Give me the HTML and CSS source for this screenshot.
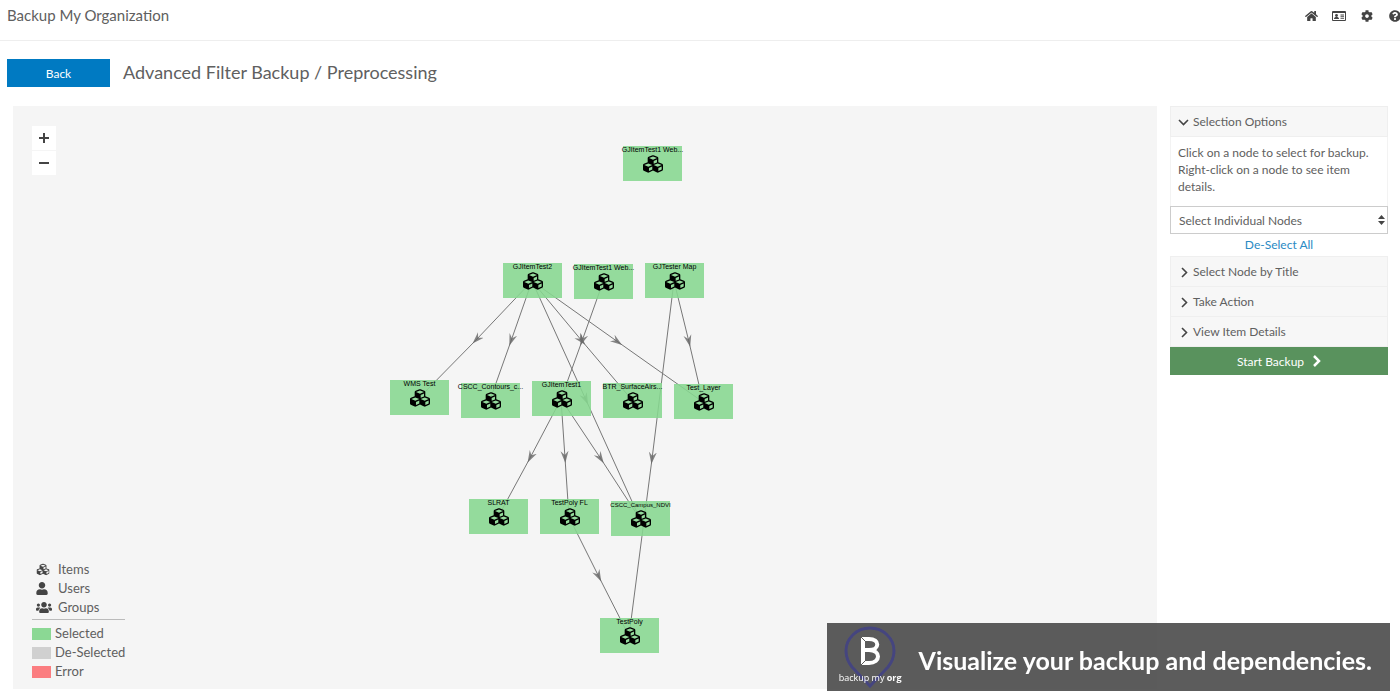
FILE: index.html
```html
<!DOCTYPE html>
<html lang="en">
<head>
<meta charset="utf-8">
<title>Backup My Organization</title>
<link rel="stylesheet" href="styles.css">
</head>
<body>
<svg class="sprite" aria-hidden="true">
  <symbol id="cubes" viewBox="0 0 512 512"><path d="M488.6 250.2L392 214V105.5c0-15-9.3-28.4-23.4-33.7l-100-37.5c-8.1-3.1-17.1-3.1-25.3 0l-100 37.5c-14.1 5.3-23.4 18.7-23.4 33.7V214l-96.6 36.2C9.3 255.5 0 268.9 0 283.9V394c0 13.6 7.7 26.1 19.9 32.2l100 50c10.1 5.1 22.1 5.1 32.2 0l103.9-52 103.9 52c10.1 5.1 22.1 5.1 32.2 0l100-50c12.2-6.1 19.9-18.6 19.9-32.2V283.9c0-15-9.3-28.4-23.4-33.7zM358 214.8l-85 31.9v-68.2l85-37v73.3zM154 104.1l102-38.2 102 38.2v.6l-102 41.4-102-41.4v-.6zm84 291.1l-85 42.5v-79.1l85-38.8v75.4zm0-112l-102 41.4-102-41.4v-.6l102-38.2 102 38.2v.6zm240 112l-85 42.5v-79.1l85-38.8v75.4zm0-112l-102 41.4-102-41.4v-.6l102-38.2 102 38.2v.6z"/></symbol>
  <symbol id="arrow-right" viewBox="0 0 10 12"><path d="M3 2 7.500 6.500 3 11" fill="none" stroke="currentColor" stroke-width="1.600"/></symbol>
</svg>

<header class="topbar">
  <h1 class="brand">Backup My Organization</h1>
  <nav class="tools" aria-label="Main">
    <a href="#" class="tool" aria-label="Home"><svg width="13" height="12" viewBox="0 0 576 512"><path d="M280.37 148.26L96 300.11V464a16 16 0 0 0 16 16l112.06-.29a16 16 0 0 0 15.92-16V368a16 16 0 0 1 16-16h64a16 16 0 0 1 16 16v95.64a16 16 0 0 0 16 16.05L464 480a16 16 0 0 0 16-16V300L295.67 148.26a12.19 12.19 0 0 0-15.3 0zM571.6 251.47L488 182.56V44.05a12 12 0 0 0-12-12h-56a12 12 0 0 0-12 12v72.61L318.47 43a48 48 0 0 0-61 0L4.34 251.47a12 12 0 0 0-1.6 16.9l25.5 31A12 12 0 0 0 45.15 301l235.22-193.74a12.19 12.19 0 0 1 15.3 0L530.9 301a12 12 0 0 0 16.9-1.6l25.5-31a12 12 0 0 0-1.7-16.93z"/></svg></a>
    <a href="#" class="tool" aria-label="Account"><svg width="14" height="12" viewBox="0 0 14 12"><path fill-rule="evenodd" d="M1 1h12a1 1 0 0 1 1 1v8a1 1 0 0 1-1 1H1a1 1 0 0 1-1-1V2a1 1 0 0 1 1-1zm0 2v7h12V3z"/><circle cx="4.500" cy="5.500" r="1.400"/><path d="M2 9c0-1.500 1-2 2.500-2S7 7.500 7 9zM8.500 4.500H12v1H8.500zM8.500 6.300H12v1H8.500zM8.500 8H12v.8H8.500z"/></svg></a>
    <a href="#" class="tool" aria-label="Settings"><svg width="12" height="12" viewBox="0 0 512 512"><path d="M487.400 315.700l-42.600-24.600c4.300-23.200 4.300-47 0-70.200l42.600-24.600c4.900-2.800 7.100-8.600 5.500-14-11.100-35.600-30-67.800-54.700-94.600-3.800-4.100-10-5.100-14.800-2.300L380.800 110c-17.900-15.400-38.500-27.300-60.800-35.100V25.800c0-5.600-3.900-10.500-9.400-11.700-36.700-8.200-74.300-7.800-109.200 0-5.500 1.200-9.400 6.100-9.400 11.700V75c-22.200 7.900-42.800 19.800-60.800 35.100L88.700 85.500c-4.900-2.800-11-1.900-14.800 2.300-24.700 26.700-43.600 58.900-54.700 94.600-1.700 5.400.6 11.200 5.500 14L67.300 221c-4.300 23.200-4.300 47 0 70.200l-42.600 24.600c-4.900 2.800-7.100 8.600-5.500 14 11.100 35.600 30 67.800 54.700 94.600 3.800 4.100 10 5.100 14.800 2.300l42.600-24.600c17.900 15.400 38.500 27.300 60.800 35.100v49.200c0 5.600 3.900 10.500 9.400 11.700 36.700 8.200 74.300 7.800 109.200 0 5.500-1.200 9.400-6.100 9.400-11.700v-49.200c22.200-7.900 42.800-19.800 60.800-35.100l42.600 24.600c4.900 2.800 11 1.900 14.800-2.300 24.700-26.700 43.600-58.900 54.700-94.600 1.500-5.500-.7-11.300-5.600-14.100zM256 336c-44.100 0-80-35.900-80-80s35.900-80 80-80 80 35.900 80 80-35.900 80-80 80z"/></svg></a>
    <a href="#" class="tool" aria-label="Help"><svg width="12" height="12" viewBox="0 0 512 512"><path d="M504 256c0 136.997-111.043 248-248 248S8 392.997 8 256C8 119.083 119.043 8 256 8s248 111.083 248 248zM262.655 90c-54.497 0-89.255 22.957-116.549 63.758-3.536 5.286-2.353 12.415 2.715 16.258l34.699 26.31c5.205 3.947 12.621 3.008 16.665-2.122 17.864-22.658 30.113-35.797 57.303-35.797 20.429 0 45.698 13.148 45.698 32.958 0 14.976-12.363 22.667-32.534 33.976C247.128 238.528 216 254.941 216 296v4c0 6.627 5.373 12 12 12h56c6.627 0 12-5.373 12-12v-1.333c0-28.462 83.186-29.647 83.186-106.667 0-58.002-60.165-102-116.531-102zM256 338c-25.365 0-46 20.635-46 46 0 25.364 20.635 46 46 46s46-20.636 46-46c0-25.365-20.635-46-46-46z"/></svg></a>
  </nav>
</header>

<div class="titlebar">
  <button class="back" type="button">Back</button>
  <h2 class="title">Advanced Filter Backup / Preprocessing</h2>
</div>

<main class="workspace">
  <section class="graph" aria-label="Dependency graph">
    <svg class="diagram" viewBox="13 106 1144 583">
      <defs>
        <marker id="vee" markerUnits="userSpaceOnUse" markerWidth="14" markerHeight="12" refX="7" refY="5" orient="auto"><path d="M0 1 12 5 0 9 4 5z"/></marker>
      </defs>
      <g class="edges">
        <path d="M532 281 476 340 419 398"/>
        <path d="M532 281 511 341 490 400"/>
        <path d="M532 281 586 400 640 519"/>
        <path d="M532 281 582 341 632 400"/>
        <path d="M532 281 618 342 703 402"/>
        <path d="M603 282 582 341 561 399"/>
        <path d="M674 281 689 342 703 402"/>
        <path d="M674 281 652 459 629 636"/>
        <path d="M561 399 530 458 498 517"/>
        <path d="M561 399 565 458 569 517"/>
        <path d="M561 399 601 459 640 519"/>
        <path d="M569 517 599 577 629 636"/>
      </g>
      <g class="nodes">
        <svg x="623" y="146" width="59" height="35"><rect class="box"/><use href="#cubes" x="20" y="8" width="20" height="20"/><text x="50%" y="6">GJItemTest1 Web...</text></svg>
        <svg x="503" y="263" width="59" height="35"><rect class="box"/><use href="#cubes" x="20" y="8" width="20" height="20"/><text x="50%" y="6">GJItemTest2</text></svg>
        <svg x="574" y="264" width="59" height="35"><rect class="box"/><use href="#cubes" x="20" y="8" width="20" height="20"/><text x="50%" y="6">GJItemTest1 Web...</text></svg>
        <svg x="645" y="263" width="59" height="35"><rect class="box"/><use href="#cubes" x="20" y="8" width="20" height="20"/><text x="50%" y="6">GJTester Map</text></svg>
        <svg x="390" y="380" width="59" height="35"><rect class="box"/><use href="#cubes" x="20" y="8" width="20" height="20"/><text x="50%" y="6">WMS Test</text></svg>
        <svg x="461" y="383" width="59" height="35"><rect class="box"/><use href="#cubes" x="20" y="8" width="20" height="20"/><text x="50%" y="6">CSCC_Contours_c...</text></svg>
        <svg x="532" y="381" width="59" height="35"><rect class="box"/><use href="#cubes" x="20" y="8" width="20" height="20"/><text x="50%" y="6">GJItemTest1</text></svg>
        <svg x="603" y="383" width="59" height="35"><rect class="box"/><use href="#cubes" x="20" y="8" width="20" height="20"/><text x="50%" y="6">BTR_SurfaceAirs...</text></svg>
        <svg x="674" y="384" width="59" height="35"><rect class="box"/><use href="#cubes" x="20" y="8" width="20" height="20"/><text x="50%" y="6">Test_Layer</text></svg>
        <svg x="469" y="499" width="59" height="35"><rect class="box"/><use href="#cubes" x="20" y="8" width="20" height="20"/><text x="50%" y="6">SLRAT</text></svg>
        <svg x="540" y="499" width="59" height="35"><rect class="box"/><use href="#cubes" x="20" y="8" width="20" height="20"/><text x="50%" y="6">TestPoly FL</text></svg>
        <svg x="611" y="501" width="59" height="35"><rect class="box"/><use href="#cubes" x="20" y="8" width="20" height="20"/><text class="long" x="50%" y="6">CSCC_Campus_NDVI</text></svg>
        <svg x="600" y="618" width="59" height="35"><rect class="box"/><use href="#cubes" x="20" y="8" width="20" height="20"/><text x="50%" y="6">TestPoly</text></svg>
      </g>
    </svg>

    <div class="zoom">
      <button type="button" aria-label="Zoom in"><svg width="10" height="10" viewBox="0 0 10 10"><path d="M5 0v10M0 5h10"/></svg></button>
      <button type="button" aria-label="Zoom out"><svg width="10" height="10" viewBox="0 0 10 10"><path d="M0 5h10"/></svg></button>
    </div>

    <div class="legend">
      <ul class="kinds">
        <li><svg width="14" height="13" viewBox="0 0 512 512"><use href="#cubes"/></svg>Items</li>
        <li><svg width="12" height="13" viewBox="0 0 448 512"><path d="M224 256c70.700 0 128-57.300 128-128S294.700 0 224 0 96 57.300 96 128s57.300 128 128 128zm89.600 32h-16.700c-22.200 10.200-46.900 16-72.900 16s-50.600-5.800-72.900-16h-16.700C60.200 288 0 348.200 0 422.400V464c0 26.500 21.500 48 48 48h352c26.500 0 48-21.500 48-48v-41.600c0-74.200-60.200-134.400-134.400-134.400z"/></svg>Users</li>
        <li><svg width="16" height="13" viewBox="0 0 640 512"><path d="M96 224c35.300 0 64-28.700 64-64s-28.700-64-64-64-64 28.700-64 64 28.700 64 64 64zm448 0c35.300 0 64-28.700 64-64s-28.700-64-64-64-64 28.700-64 64 28.700 64 64 64zm32 32h-64c-17.600 0-33.500 7.100-45.100 18.600 40.300 22.100 68.900 62 75.100 109.400h66c17.700 0 32-14.300 32-32v-32c0-35.300-28.700-64-64-64zm-256 0c61.900 0 112-50.100 112-112S381.900 32 320 32 208 82.100 208 144s50.100 112 112 112zm76.800 32h-8.300c-20.800 10-43.900 16-68.500 16s-47.600-6-68.500-16h-8.300C179.600 288 128 339.600 128 403.200V432c0 26.500 21.500 48 48 48h288c26.500 0 48-21.500 48-48v-28.800c0-63.600-51.600-115.200-115.200-115.200zm-223.700-13.400C161.500 263.100 145.600 256 128 256H64c-35.300 0-64 28.700-64 64v32c0 17.700 14.300 32 32 32h65.900c6.300-47.400 34.900-87.300 75.200-109.400z"/></svg>Groups</li>
      </ul>
      <ul class="states">
        <li><span class="swatch selected"></span>Selected</li>
        <li><span class="swatch deselected"></span>De-Selected</li>
        <li><span class="swatch error"></span>Error</li>
      </ul>
    </div>
  </section>

  <aside class="panel">
    <button class="section" type="button" aria-expanded="true"><svg class="chevron down" width="10" height="12"><use href="#arrow-right"/></svg>Selection Options</button>
    <p class="hint">Click on a node to select for backup. Right-click on a node to see item details.</p>
    <div class="picker">
      <select aria-label="Selection mode"><option>Select Individual Nodes</option></select>
      <svg class="caret" width="7" height="10" viewBox="0 0 7 10"><path d="M0 4 3.500 0 7 4zM0 6h7L3.500 10z"/></svg>
    </div>
    <a class="clear" href="#">De-Select All</a>
    <button class="section" type="button" aria-expanded="false"><svg class="chevron" width="10" height="12"><use href="#arrow-right"/></svg>Select Node by Title</button>
    <button class="section" type="button" aria-expanded="false"><svg class="chevron" width="10" height="12"><use href="#arrow-right"/></svg>Take Action</button>
    <button class="section" type="button" aria-expanded="false"><svg class="chevron" width="10" height="12"><use href="#arrow-right"/></svg>View Item Details</button>
    <button class="start" type="button">Start Backup<svg width="8" height="12" viewBox="0 0 8 12"><path d="M1 1 6 6 1 11" fill="none" stroke="currentColor" stroke-width="2.500"/></svg></button>
  </aside>
</main>

<div class="banner">
  <div class="logo">
    <svg class="pin" width="54" height="62" viewBox="0 0 54 62"><path d="M27 60 9 41C5 36 3 31 3 25a24 23 0 0 1 48 0C51 31 49 36 45 41z" fill="none" stroke="#45457f" stroke-width="3"/><g fill="none" stroke="#fff" stroke-width="4"><path d="M19 13h7c11 0 11 11 0 11h-4M26 24c12 0 12 13 0 13h-7"/><path d="M20 11v28"/></g><path d="M18 11l5 5M18 39l5-5" stroke="#595959"/></svg>
    <span class="logo-text">backup my <b>org</b></span>
  </div>
  <p class="slogan">Visualize your backup and dependencies.</p>
</div>
</body>
</html>
```
FILE: styles.css
```css
* { box-sizing: border-box; }

body {
  margin: 0;
  min-height: 100vh;
  display: flex;
  flex-direction: column;
  background: #fff;
  color: #606060;
  font: 12px/17px Lato, sans-serif;
}

h1, h2, p, ul { margin: 0; padding: 0; font-weight: 400; }
ul { list-style: none; }
button, select { font: inherit; color: inherit; border: 0; border-radius: 0; cursor: pointer; }
a { text-decoration: none; }
svg { fill: currentColor; flex: none; }

.sprite { position: absolute; width: 0; height: 0; }

.topbar {
  display: flex;
  justify-content: space-between;
  align-items: flex-start;
  height: 41px;
  padding: 5px 0 0 7px;
  border-bottom: 1px solid #eee;
  overflow: hidden;
}
.brand { font-size: 15px; line-height: 20px; }
.tools { display: flex; margin-right: -9px; }
.tool { width: 28px; height: 22px; display: flex; align-items: center; justify-content: center; color: #444; }

.titlebar { display: flex; align-items: flex-start; gap: 13px; padding: 18px 7px 19px; }
.back { width: 103px; height: 28px; background: #007ac2; color: #fff; }
.title { font-size: 18px; line-height: 26px; }

.workspace {
  flex: 1;
  display: grid;
  grid-template-columns: 1fr 218px;
  gap: 13px;
  padding: 0 12px 11px 13px;
}

.graph { position: relative; background: #f5f5f5; }
.diagram { display: block; width: 100%; height: auto; }
.edges { fill: none; stroke: #777; marker-mid: url(#vee); }
.edges path { stroke-width: 1px; }
#vee path { fill: #666; fill-opacity: .8; stroke: none; }
.nodes { color: #000; font: 7px "Liberation Sans", sans-serif; text-anchor: middle; }
.nodes svg { overflow: visible; }
.box { width: 100%; height: 100%; fill: #86d790; fill-opacity: .88; }
.long { font-size: 6px; }

.zoom { position: absolute; left: 19px; top: 20px; display: grid; gap: 1px; }
.zoom button { width: 24px; height: 24px; padding: 0; display: grid; place-items: center; background: #fff; }
.zoom path { fill: none; stroke: #444; stroke-width: 2px; }

.legend { position: absolute; left: 19px; bottom: 8px; font-size: 13px; line-height: 19px; }
.legend li { display: flex; align-items: center; }
.kinds { padding: 0 0 2px 4px; border-bottom: 1px solid #bbb; }
.kinds svg { color: #444; }
.legend .kinds li { display: grid; grid-template-columns: 22px auto; justify-content: start; }
.states { padding-top: 4px; }
.swatch { width: 19px; height: 12px; margin-right: 4px; }
.selected { background: #8bd894; }
.deselected { background: #d0d0d0; }
.error { background: #fb7d80; }

.panel { display: flex; flex-direction: column; align-self: start; border-top: 1px solid #eee; }
.section {
  display: flex;
  align-items: center;
  gap: 4px;
  height: 30px;
  padding: 0 8px;
  background: #f7f7f7;
  border: 1px solid #efefef;
  border-top: 0;
  text-align: left;
}
.chevron { color: #444; }
.down { transform: rotate(90deg); }
.hint { padding: 7px 7px 11px; border: 1px solid #f3f3f3; border-width: 0 1px; }
.picker { display: grid; align-items: center; }
.picker select { grid-area: 1 / 1; height: 28px; padding: 0 8px; appearance: none; background: #fff; border: 1px solid #ccc; }
.caret { grid-area: 1 / 1; justify-self: end; margin-right: 3px; pointer-events: none; color: #444; }
.clear { padding: 2px 0 3px; text-align: center; color: #2a8ac4; border-bottom: 1px solid #efefef; }
.start { display: flex; align-items: center; justify-content: center; gap: 9px; height: 28px; background: #59925d; color: #fff; }

.banner {
  position: fixed;
  right: 10px;
  bottom: 9px;
  display: flex;
  align-items: center;
  height: 68px;
  padding: 0 18px 0 12px;
  gap: 17px;
  background: rgba(74, 74, 74, .9);
  color: #fff;
}
.logo { display: grid; justify-items: center; }
.pin { grid-area: 1 / 1; }
.logo-text { grid-area: 1 / 1; align-self: end; font: 9px/20px "Open Sans", sans-serif; }
.slogan { font-size: 25px; line-height: 32px; font-weight: 700; padding-top: 6px; }
```
